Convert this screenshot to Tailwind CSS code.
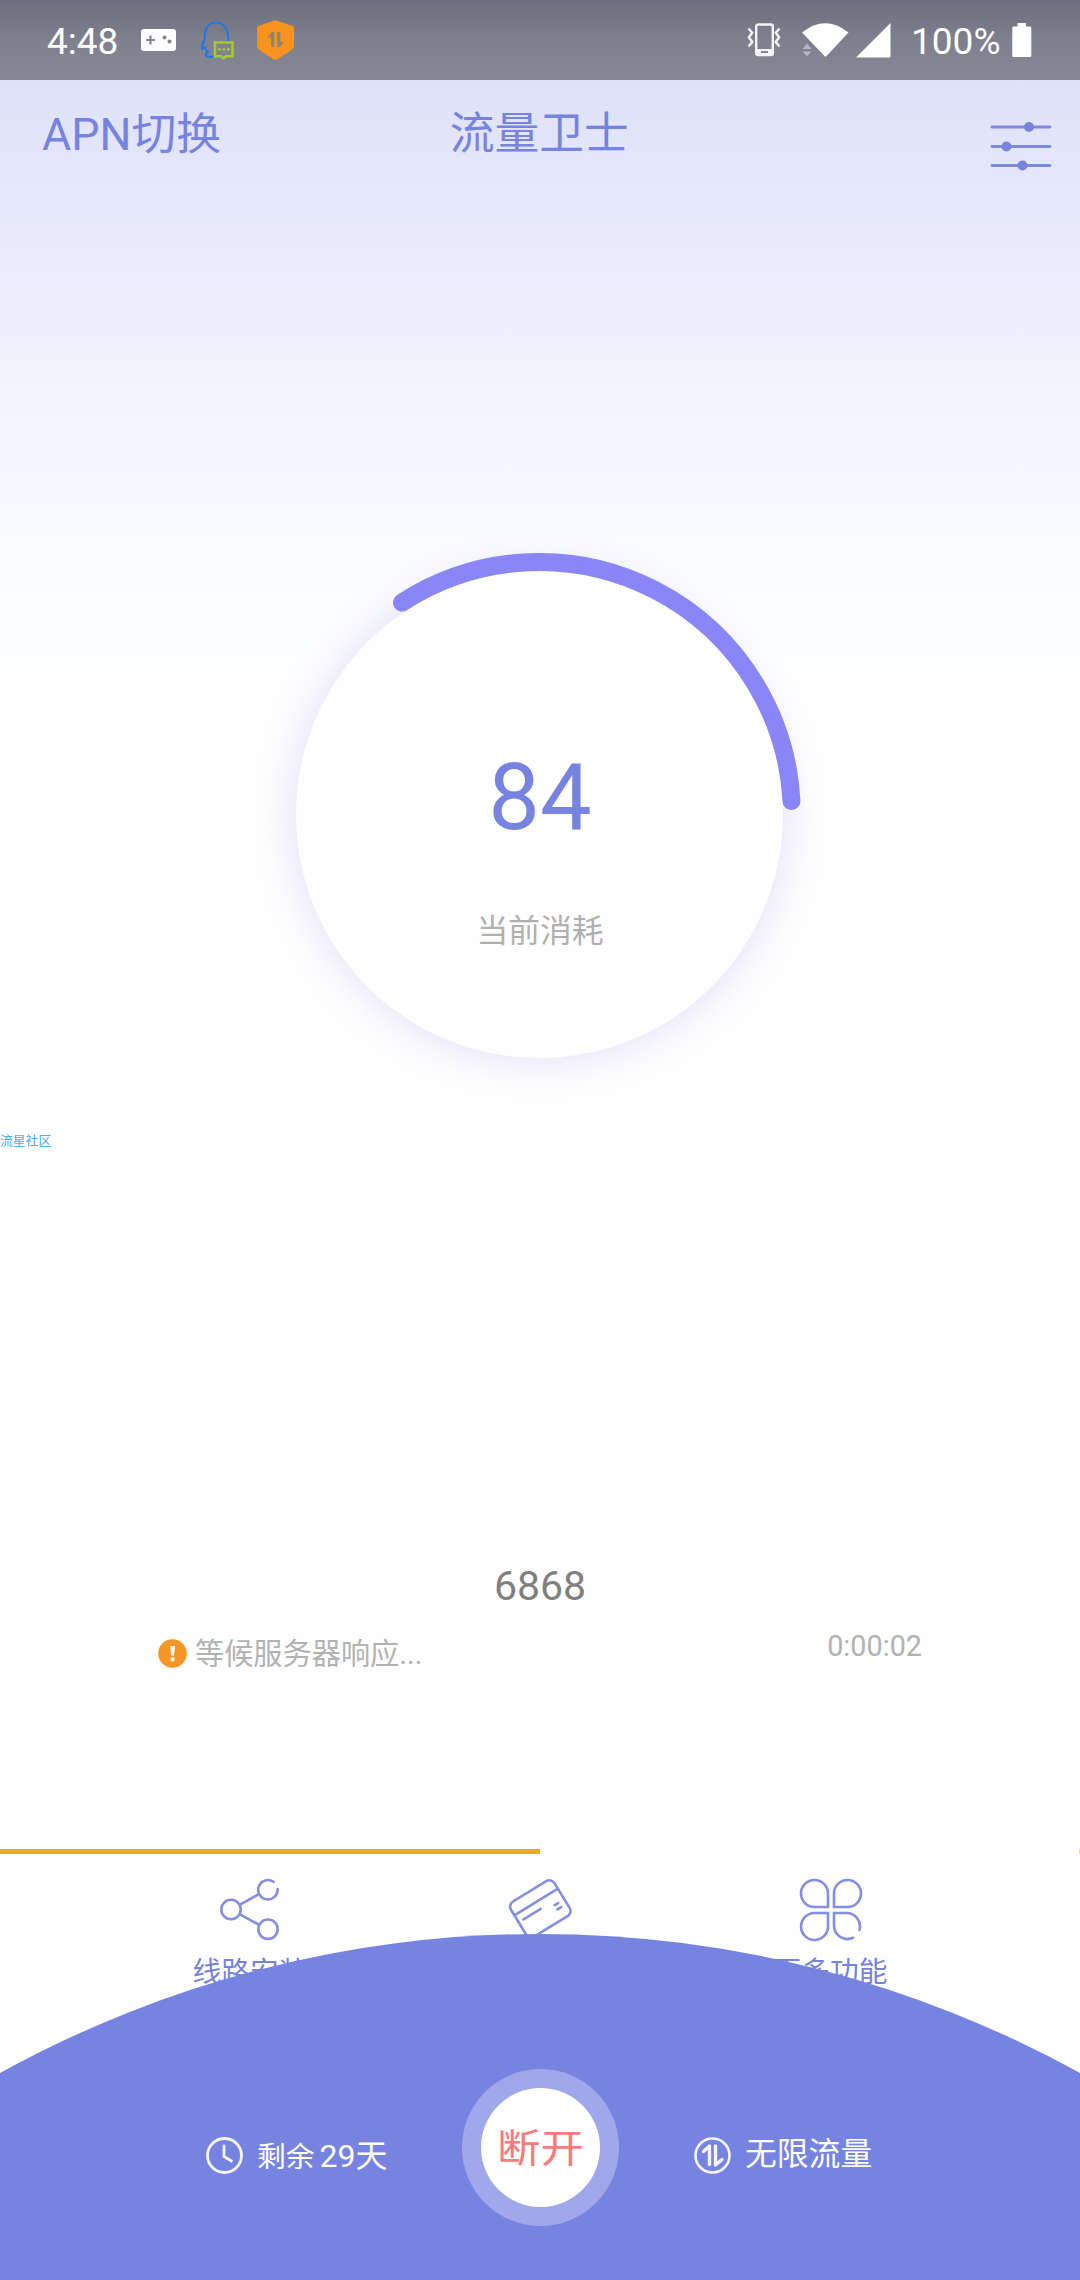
<!DOCTYPE html>
<html lang="zh-CN">
<head>
<meta charset="utf-8">
<title>流量卫士</title>
<script src="https://cdn.jsdelivr.net/npm/@tailwindcss/browser@4"></script>
</head>
<body class="bg-white">
<div class="relative flex h-[2280px] w-[1080px] flex-col overflow-hidden bg-[linear-gradient(to_bottom,#dfe1f8_0,#e0e2f9_90px,#e5e7fb_190px,#f2f3fd_380px,#fafbff_540px,#fdfeff_660px,#fefefe_760px)] font-['Roboto','Noto_Sans_CJK_SC',sans-serif] text-[#7783e0]">

  <!-- status bar -->
  <div class="flex h-20 shrink-0 items-center bg-linear-to-b from-[#6c6e7d] via-[#7e808e] to-[#868896] pl-[47px] text-[37px] text-white">
    <span class="mt-[2px] w-[94px] leading-none">4:48</span>
    <svg class="h-[22px] w-[35px]" viewBox="0 0 35 22"><rect width="35" height="22" rx="3" fill="#fff"/><path d="M5 11h9M9.500 6.500v9" stroke="#85868f" stroke-width="2.200"/><circle cx="23.500" cy="8.500" r="2" fill="#85868f"/><circle cx="28.500" cy="12.500" r="2" fill="#85868f"/></svg>
    <svg class="ml-6 h-10 w-9" viewBox="0 0 36 40" fill="none"><path d="M4.500 20C4.500 8 8 2.500 16 2.500s12.500 6.500 12.500 18.500M4.500 20C2 24 1.500 26 2 29c1 0 2-1 3-2 .5 2 1.500 4 3 5.500-2 1-2.500 2-2 3.500 3 1.500 6 1 8.500 0" stroke="#2176e3" stroke-width="2.200" stroke-linejoin="round"/><path d="M15 22.500h17.500v13.700h-6.500l-2.500 2-2.500-2H15z" stroke="#a6c92f" stroke-width="2.600"/><path d="M18 29.500h2.600m1.900 0h2.600m1.900 0h2.600" stroke="#a6c92f" stroke-width="2.600"/></svg>
    <svg class="ml-[21px] h-10 w-[37px]" viewBox="0 0 37 40"><path d="M16.500 .8q2-.9 4 0L35.500 6q1.500.7 1.500 2v18q0 2-1.500 3.200L21 39q-2.500 1.200-5 0L1.500 29.200Q0 28 0 26V8q0-1.300 1.500-2z" fill="#f9931f"/><path d="M17.300 12v15H14v-9.500h-3.600l4.400-5.500zM20.200 27V12h3.300v10h3.300l-4 5z" fill="#938174"/></svg>
    <svg class="ml-[453px] h-[34px] w-[34px]" viewBox="0 0 34 34" fill="none" stroke="#f4f4f6"><rect x="9.200" y="1.500" width="16.600" height="30.500" rx="2" stroke-width="2.400"/><path d="M9 29h17" stroke-width="6"/><path d="M14 29h7" stroke="#868896" stroke-width="2"/><path d="M1.500 5.500l3.800 4.200-3.500 4.500 3.500 4.800-3.800 4.500M32.500 5.500l-3.800 4.200 3.500 4.500-3.500 4.800 3.800 4.500" stroke-width="2.400" stroke-linejoin="round"/></svg>
    <svg class="ml-5 h-[34px] w-[48px]" viewBox="0 0 48 34"><path d="M1 9.500Q24-9 47.500 9.500L24.500 34z" fill="#fff"/><path d="M1.500 26L6 20.500l4.500 5.500zM1.500 28.500L6 33.500l4.500-5z" fill="#b4b5be"/></svg>
    <svg class="ml-[7px] h-[35px] w-[35px]" viewBox="0 0 35 35"><path d="M34.500 0V33.500q0 1-1 1H0z" fill="#fff"/></svg>
    <span class="mt-[2px] ml-5 w-[90px] leading-none">100%</span>
    <svg class="ml-[11px] h-[34px] w-5" viewBox="0 0 20 34"><path d="M5.500 0h8.500v3.500h4q1.300 0 1.300 1.300v28q0 1.200-1.300 1.200H1.500Q.3 34 .3 32.800v-28q0-1.300 1.200-1.300h4z" fill="#fff"/></svg>
  </div>

  <!-- title bar -->
  <header class="grid h-[107px] shrink-0 grid-cols-3 items-center pr-[28px] pl-[42px] text-[44.800px]">
    <span class="mt-[3px] leading-none">APN切换</span>
    <h1 class="mt-px w-[337px] pl-[71px] leading-none">流量卫士</h1>
    <svg class="mt-[25px] h-[50px] w-[62px] justify-self-end" viewBox="0 0 62 50" fill="#7783e0"><path d="M2 6h58M2 25.500h58M2 44.500h58" stroke="#7f8adf" stroke-width="2.800" stroke-linecap="round"/><circle cx="39" cy="6" r="5"/><circle cx="16.500" cy="25.500" r="5"/><circle cx="32.500" cy="44.500" r="5"/></svg>
  </header>

  <!-- usage dial -->
  <section class="mt-[365px] flex h-[526px] shrink-0 justify-center">
    <div class="relative flex h-[526px] w-[526px] flex-col items-center">
      <div class="absolute top-[19px] left-[19px] h-[487px] w-[487px] rounded-full bg-[#fefefe] shadow-[0_0_40px_0_rgba(125,110,225,0.23)]"></div>
      <svg class="absolute inset-0 h-full w-full" viewBox="0 0 526 526" fill="none"><path d="M125 50.600A252.500 252.500 0 0 1 514.500 249" stroke="#8a86f7" stroke-width="18" stroke-linecap="round"/></svg>
      <p class="relative mt-[200px] text-[92px] leading-[92px]">84</p>
      <p class="relative mt-[67px] text-[31.800px] leading-[40px] text-[#b0b0b0]">当前消耗</p>
    </div>
  </section>

  <p class="mt-[53px] h-5 shrink-0 text-[12.800px] leading-5 text-[#4ba9ee]">流星社区</p>

  <!-- connection state -->
  <section class="mt-[409px] flex h-[290px] shrink-0 flex-col px-[158px]">
    <p class="mt-px self-center text-[41px] leading-[50px] text-[#808080]">6868</p>
    <div class="mt-[17px] flex items-start justify-between text-[29.200px] leading-9 text-[#b2b2b2]">
      <p class="mt-[8px] flex items-center gap-2"><svg class="-mt-[2px] h-[29px] w-[29px]" viewBox="0 0 29 29"><circle cx="14.500" cy="14.500" r="14.300" fill="#f79627"/><path d="M12.300 7h4.600l-.8 9.500h-3z" fill="#fff"/><circle cx="14.600" cy="20.300" r="2.100" fill="#fff"/></svg><span>等候服务器响应...</span></p>
      <time class="text-[28.800px]">0:00:02</time>
    </div>
  </section>

  <!-- progress -->
  <div class="-mt-px flex h-[5px] shrink-0 justify-between"><div class="bg-[#f5a61d]" style="width:50%"></div><div class="w-px bg-[#f5a61d]/50"></div></div>

  <!-- shortcuts -->
  <nav class="mx-auto mt-[24px] grid h-[120px] w-[873px] shrink-0 grid-cols-3 text-[28.800px] leading-[36px] text-[#7783d8]">
    <div class="flex flex-col items-center gap-[12px]">
      <svg class="h-[64px] w-[60px]" viewBox="0 0 60 64" fill="none" stroke="#858ee0" stroke-width="2.600"><circle cx="12" cy="31.500" r="9.700"/><path d="M54.500 3.800A9.700 9.700 0 1 0 58.600 11" stroke-linecap="round"/><circle cx="49" cy="51.200" r="9.700"/><path d="M20.600 26.800L40.200 16M20.600 36.200L40.400 47"/></svg>
      <span class="pl-[2px]">线路安装</span>
    </div>
    <div class="flex flex-col items-center gap-[12px]">
      <svg class="h-[64px] w-[66px]" viewBox="0 0 66 64" fill="none" stroke="#858ee0" stroke-width="2.600"><g transform="translate(33.300 30.800) rotate(-31.500)"><rect x="-25.500" y="-20.500" width="51" height="41" rx="6"/><path d="M-25.500-8h51"/><path d="M-20 .3H.3M14.200 4.400h4M14.200 9.500h4.600" stroke-linecap="round"/></g></svg>
    </div>
    <div class="flex flex-col items-center gap-[12px]">
      <svg class="h-[64px] w-[64px]" viewBox="0 0 64 64" fill="none" stroke="#858ee0" stroke-width="2.600"><path d="M29 29V15.500A13.500 13.500 0 1 0 15.500 29zM35 29V15.500A13.500 13.500 0 1 1 48.500 29zM29 35V47.500A13.500 13.500 0 1 1 15.500 35z"/><path d="M54 59.800A13.500 13.500 0 0 1 35 47.500V35H47.500A13.500 13.500 0 0 1 60.500 52" stroke-linecap="round"/></svg>
      <span class="pr-[2px]">更多功能</span>
    </div>
  </nav>

  <!-- curved bottom panel, laid over the shortcuts -->
  <div class="absolute bottom-0 left-0 h-[347px] w-[1080px] text-white">
    <svg class="absolute inset-0 h-full w-full" viewBox="0 0 1080 347"><path d="M0 140A1118 1118 0 0 1 1080 140V347H0z" fill="#7783e1"/></svg>
    <div class="relative grid h-full grid-cols-[462px_157px_1fr] pt-[136px]">
      <div class="flex h-[156px] items-center pt-[16px] pl-[205px]">
        <svg class="h-[39px] w-[39px] shrink-0" viewBox="0 0 39 39" fill="none" stroke="#f4f5fd" stroke-width="2.800" stroke-linecap="round"><circle cx="19.500" cy="19.500" r="17"/><path d="M19 10v10.500l7.500 4.500"/></svg>
        <p class="mt-[2px] ml-[13px] flex items-baseline gap-[5px] leading-10"><span class="text-[28.800px]">剩余</span><span class="text-[32px]">29天</span></p>
      </div>
      <button class="flex h-[157px] w-[157px] items-center justify-center rounded-full bg-[#a0a8eb]">
        <span class="flex h-[119px] w-[119px] items-center justify-center rounded-full bg-white pt-[3px] text-[43.500px] leading-none text-[#f67b7d]"><span class="scale-y-90">断开</span></span>
      </button>
      <div class="flex h-[156px] items-center pt-[14px] pl-[74px]">
        <svg class="mt-[2px] h-[39px] w-[39px] shrink-0" viewBox="0 0 39 39" fill="none" stroke="#f4f5fd" stroke-linecap="round" stroke-linejoin="round"><circle cx="19.500" cy="19.500" r="17" stroke-width="2.600"/><path d="M10.500 15.500l6-5.500v18.500M22.500 10v19l6.500-5.500" stroke-width="3.400"/></svg>
        <span class="ml-[13px] text-[31.800px] leading-10">无限流量</span>
      </div>
    </div>
  </div>
</div>
</body>
</html>
